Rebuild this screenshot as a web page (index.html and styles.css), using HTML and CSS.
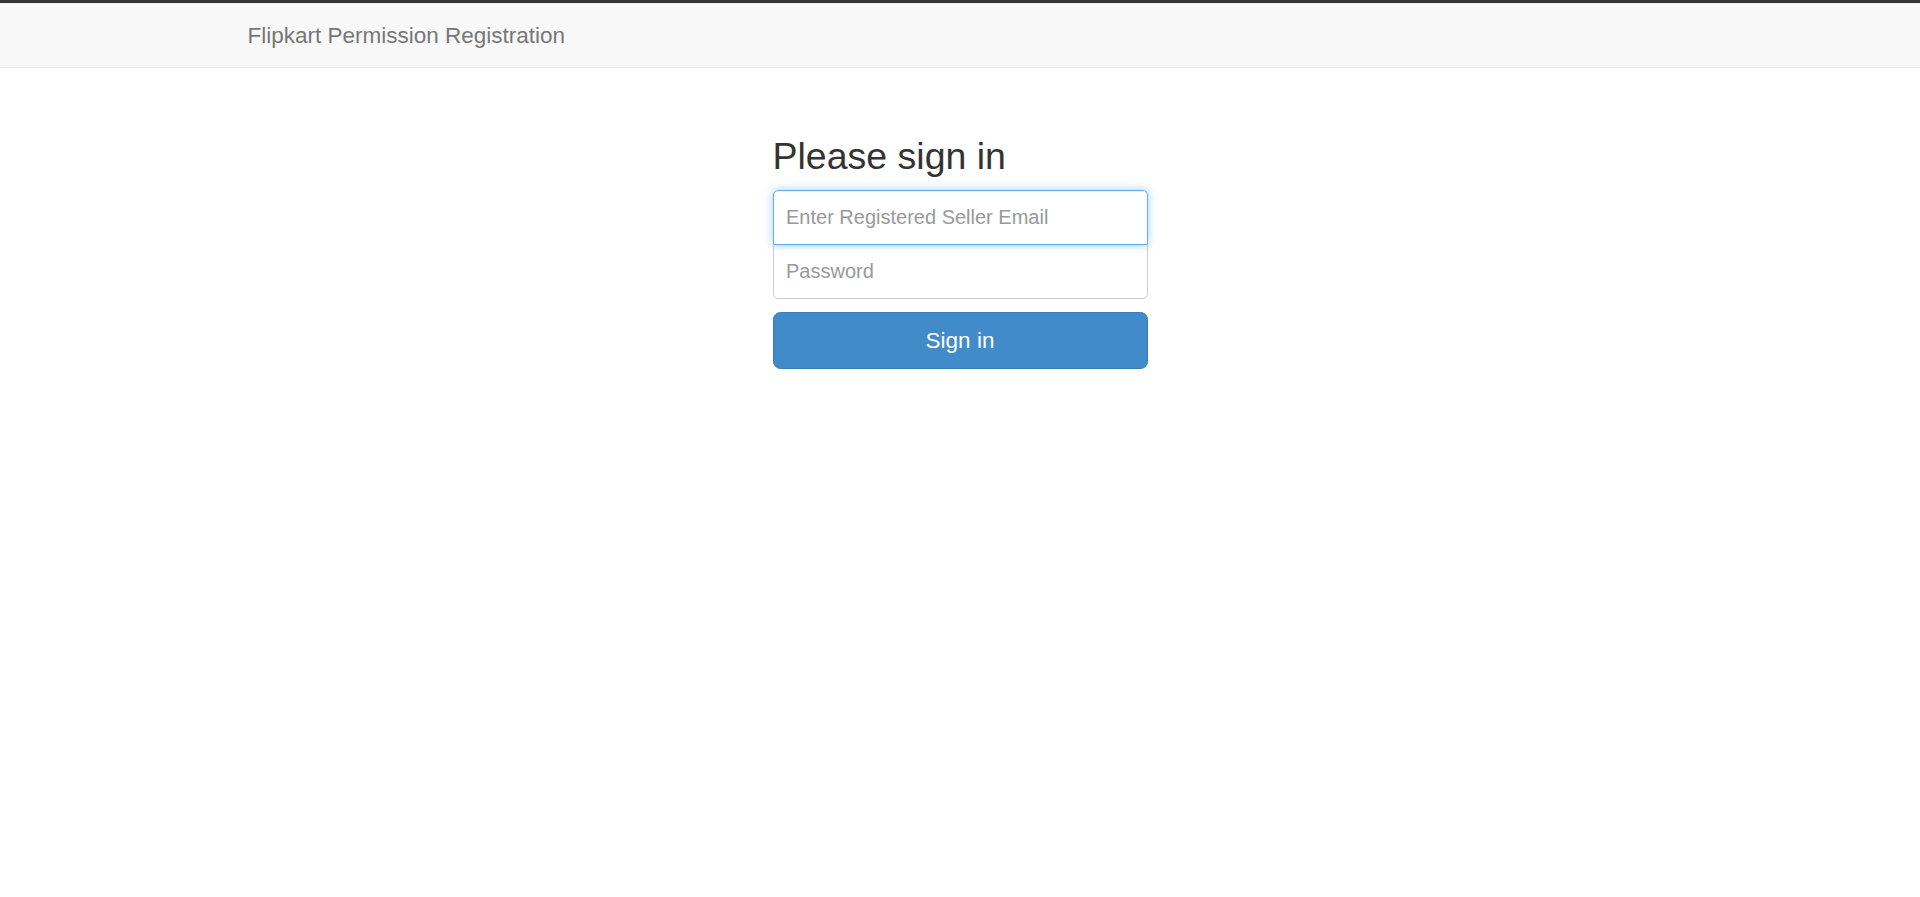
FILE: index.html
```html
<!DOCTYPE html>
<html lang="en">
<head>
<meta charset="utf-8">
<title>Flipkart Permission Registration</title>
<link rel="stylesheet" href="styles.css">
</head>
<body>
<div class="topbar"></div>
<nav class="navbar">
  <div class="container">
    <a class="brand" href="#">Flipkart Permission Registration</a>
  </div>
</nav>
<main class="main">
  <form class="form-signin">
    <h2 class="heading">Please sign in</h2>
    <input class="control email" type="email" placeholder="Enter Registered Seller Email">
    <input class="control password" type="password" placeholder="Password">
    <button class="btn" type="button">Sign in</button>
  </form>
</main>
</body>
</html>
```

FILE: styles.css
```css
* { box-sizing: border-box; }
html, body { margin: 0; padding: 0; }
body {
  font-family: "Liberation Sans", Arial, Helvetica, sans-serif;
  font-size: 17.5px;
  line-height: 1.42857;
  color: #333;
  background: #fff;
}
.topbar {
  height: 3px;
  background: #353535;
}
.navbar {
  background: #f8f8f8;
  border-top: 1px solid #ececec;
  border-bottom: 1.25px solid #e7e7e7;
  min-height: 64px;
}
.container {
  width: 1462.5px;
  margin: 0 auto;
  padding: 0 18.75px;
}
.brand {
  display: inline-block;
  margin-left: -18.75px;
  padding: 18.75px;
  height: 62.5px;
  font-size: 22.5px;
  line-height: 25px;
  color: #777;
  text-decoration: none;
}
.main {
  padding-top: 25px;
}
.form-signin {
  width: 412.5px;
  margin: 0 auto;
  padding: 18.75px;
  display: flex;
  flex-direction: column;
}
.heading {
  margin: 24.5px 0 12.5px;
  font-size: 37.5px;
  font-weight: 500;
  line-height: 1.1;
  color: #333;
}
.control {
  display: block;
  width: 100%;
  height: 55.5px;
  padding: 12.5px;
  font-family: inherit;
  font-size: 20px;
  line-height: 1.42857;
  color: #555;
  background: #fff;
  border: 1.25px solid #ccc;
  outline: none;
  box-shadow: inset 0 1px 1px rgba(0,0,0,.075);
}
.control::placeholder { color: #999; }
.email {
  position: relative;
  z-index: 2;
  margin-bottom: -1.25px;
  border-radius: 5px 5px 0 0;
  border-color: #66afe9;
  box-shadow: inset 0 1px 1px rgba(0,0,0,.075), 0 0 10px rgba(102,175,233,.6);
}
.password {
  margin-bottom: 12.5px;
  border-radius: 0 0 5px 5px;
}
.btn {
  display: block;
  width: 100%;
  height: 57.5px;
  padding: 12.5px 20px;
  font-family: inherit;
  font-size: 22.5px;
  line-height: 1.33;
  color: #fff;
  background: #428bca;
  border: 1.25px solid #357ebd;
  border-radius: 7.5px;
  cursor: pointer;
}
```
